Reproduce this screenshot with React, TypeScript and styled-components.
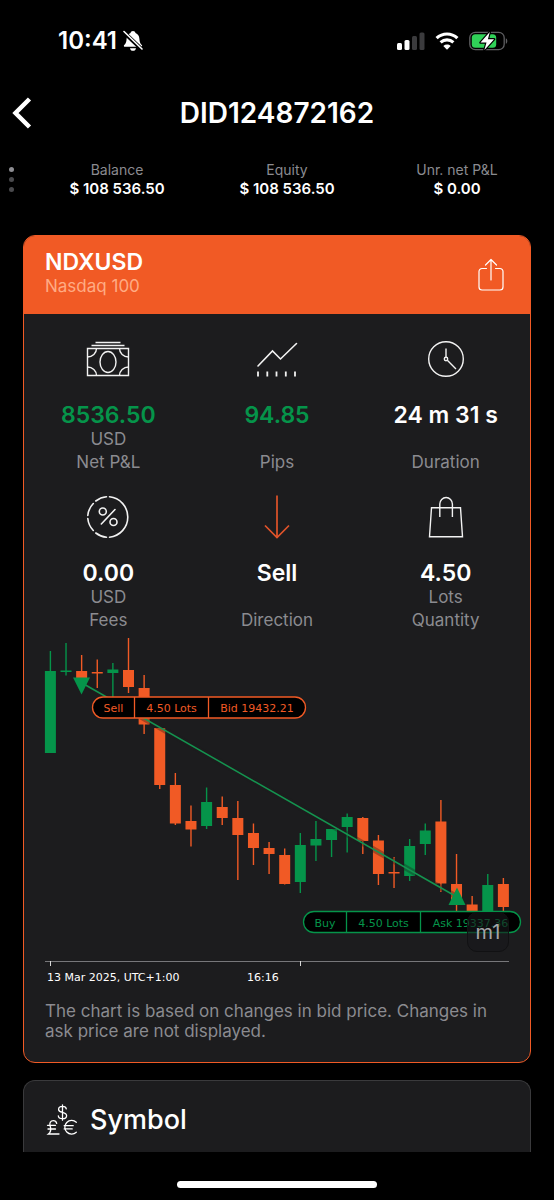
import React from 'react';
import styled, { createGlobalStyle } from 'styled-components';

const colors = {
  accent: '#f15a25',
  green: '#05944a',
  card: '#1c1c1e',
  muted: '#8b8b90',
  line: '#3a3a3c',
};

const GlobalStyle = createGlobalStyle`
  *, *::before, *::after { box-sizing: border-box; }
  body {
    margin: 0;
    background: #000;
    color: #fff;
    font-family: Inter, "Liberation Sans", sans-serif;
  }
  h1, h2, p, dl, dd, dt { margin: 0; }
  button { font: inherit; color: inherit; background: none; border: 0; padding: 0; cursor: pointer; }
`;

const Screen = styled.div`
  min-height: 100vh;
  display: flex;
  flex-direction: column;
`;

const StatusBar = styled.div`
  display: flex;
  align-items: center;
  justify-content: space-between;
  height: 82px;
  padding: 0 46px 0 58px;
`;

const Clock = styled.div`
  display: flex;
  align-items: center;
  gap: 6px;
  font-size: 24px;
  font-weight: 600;
  line-height: 28px;
`;

const StatusIcons = styled.div`
  display: flex;
  align-items: center;
  gap: 10px;
`;

const TopBar = styled.header`
  display: grid;
  grid-template-columns: 44px 1fr 44px;
  align-items: center;
  height: 62px;
`;

const BackButton = styled.button`
  display: flex;
  align-items: center;
  justify-content: center;
  height: 44px;
`;

const Title = styled.h1`
  font-size: 28px;
  font-weight: 600;
  line-height: 32px;
  text-align: center;
`;

const Summary = styled.section`
  display: flex;
  align-items: center;
  padding: 16px 12px 0 9px;
`;

const Pager = styled.div`
  display: flex;
  flex-direction: column;
  gap: 5px;
  width: 23px;
`;

const PagerDot = styled.span<{ $active?: boolean }>`
  width: 5px;
  height: 5px;
  border-radius: 50%;
  background: ${(p) => (p.$active ? '#8e8e93' : '#4a4a4d')};
`;

const SummaryList = styled.dl`
  flex: 1;
  display: grid;
  grid-template-columns: repeat(3, 1fr);
  text-align: center;
`;

const SummaryLabel = styled.dt`
  color: ${colors.muted};
  font-size: 14px;
  line-height: 20px;
`;

const SummaryValue = styled.dd`
  font-size: 15px;
  font-weight: 600;
  line-height: 18px;
`;

const Main = styled.main`
  display: flex;
  flex-direction: column;
  gap: 17px;
  padding: 37px 23px 0;
`;

const TradeCard = styled.article`
  overflow: hidden;
  border: 1px solid ${colors.accent};
  border-radius: 12px;
  background: ${colors.card};
`;

const TradeHeader = styled.header`
  display: flex;
  align-items: center;
  justify-content: space-between;
  height: 78px;
  padding: 0 26px 0 21px;
  background: ${colors.accent};
`;

const InstrumentInfo = styled.div`
  padding-bottom: 6px;
`;

const Instrument = styled.h2`
  font-size: 23px;
  font-weight: 600;
  line-height: 28px;
`;

const InstrumentName = styled.p`
  color: #ffab84;
  font-size: 17px;
  line-height: 20px;
`;

const IconButton = styled.button`
  display: flex;
`;

const Stats = styled.dl`
  display: grid;
  grid-template-columns: repeat(3, 1fr);
  row-gap: 20px;
  padding-top: 23px;
`;

const Stat = styled.div`
  display: grid;
  grid-template-rows: 44px 20px 28px 20px 26px;
  justify-items: center;
  align-items: center;
`;

const StatValue = styled.dd<{ $positive?: boolean }>`
  grid-row: 3;
  color: ${(p) => (p.$positive ? colors.green : '#fff')};
  font-size: 23px;
  font-weight: 600;
  line-height: 28px;
`;

const StatUnit = styled.dd`
  grid-row: 4;
  color: ${colors.muted};
  font-size: 17px;
  line-height: 20px;
`;

const StatLabel = styled.dt`
  grid-row: 5;
  color: ${colors.muted};
  font-size: 17px;
  line-height: 20px;
`;

const ChartBox = styled.div`
  position: relative;
`;

const ChartSvg = styled.svg`
  display: block;
  width: 100%;
  height: auto;
  font-family: "DejaVu Sans", Verdana, sans-serif;
  font-size: 11px;
`;

const IntervalButton = styled.button`
  position: absolute;
  right: 21px;
  bottom: 36px;
  width: 42px;
  height: 40px;
  border: 1px solid #111113;
  border-radius: 10px;
  background: rgba(24, 24, 26, 0.6);
  color: #a5a5a8;
  font-size: 20px;
  line-height: 36px;
`;

const Note = styled.p`
  padding: 13px 21px 21px;
  color: ${colors.muted};
  font-size: 17px;
  line-height: 20px;
`;

const SymbolCard = styled.section`
  display: flex;
  align-items: center;
  gap: 12px;
  height: 72px;
  padding: 6px 22px 0;
  border: 1px solid ${colors.line};
  border-bottom: 0;
  border-radius: 12px 12px 0 0;
  background: ${colors.card};
`;

const SymbolTitle = styled.h2`
  font-size: 27px;
  font-weight: 500;
  line-height: 32px;
`;

const HomeArea = styled.footer`
  display: flex;
  justify-content: center;
  margin-top: auto;
  padding: 29px 0 12px;
`;

const HomeBar = styled.div`
  width: 36%;
  height: 7px;
  border-radius: 4px;
  background: #fff;
`;

const MutedBell = () => (
  <svg width="20" height="22" viewBox="0 0 20 22" aria-hidden="true">
    <path
      d="M10 1c1.300 0 2.300.8 2.500 2 2.500.9 3.700 3 3.900 5.700.2 3.500.8 4.700 2.400 6.300.7.800.3 1.800-.8 1.800H2c-1.100 0-1.500-1-.8-1.800 1.600-1.600 2.200-2.800 2.400-6.300C3.800 6 5 3.900 7.500 3 7.700 1.800 8.700 1 10 1zM7 18.200h6c-.2 1.600-1.400 2.600-3 2.600s-2.800-1-3-2.600z"
      fill="#fff"
    />
    <path d="M0 1.500l19.500 18.500" stroke="#000" strokeWidth="4" />
    <path d="M1 1.500l18 17.500" stroke="#fff" strokeWidth="1.600" strokeLinecap="round" />
  </svg>
);

const Signal = () => (
  <svg width="28" height="18" viewBox="0 0 28 18" aria-hidden="true">
    <rect x="0" y="11" width="5" height="7" rx="1.500" fill="#fff" />
    <rect x="7.500" y="8" width="5" height="10" rx="1.500" fill="#fff" />
    <rect x="15" y="4" width="5" height="14" rx="1.500" fill="#3b3b3d" />
    <rect x="22.500" y="0.500" width="5" height="17.500" rx="1.500" fill="#3b3b3d" />
  </svg>
);

const Wifi = () => (
  <svg width="24" height="18" viewBox="0 0 24 18" aria-hidden="true">
    <path d="M1.600 6.200c6-5.600 14.800-5.600 20.800 0" fill="none" stroke="#fff" strokeWidth="3.200" />
    <path d="M5.600 10.400c3.700-3.400 9.100-3.400 12.800 0" fill="none" stroke="#fff" strokeWidth="3.100" />
    <path d="M12 17.800l-3.700-3.900c2.200-1.900 5.200-1.900 7.400 0z" fill="#fff" />
  </svg>
);

const Battery = () => (
  <svg width="39" height="20" viewBox="0 0 39 20" aria-hidden="true">
    <rect x="0.800" y="1.300" width="34.400" height="17.400" rx="5.500" fill="none" stroke="#5f5f62" strokeWidth="1.300" />
    <rect x="2.800" y="3.300" width="24.400" height="13.400" rx="3.500" fill="#30d158" />
    <path d="M36.800 7.200c2 .8 2 4.800 0 5.600z" fill="#5f5f62" />
    <path
      d="M20.800 1L11.500 11.600h6L15.400 19l9.700-10.800h-6.200z"
      fill="#fff"
      stroke="#000"
      strokeWidth="2.400"
      strokeLinejoin="round"
      paintOrder="stroke"
    />
  </svg>
);

const ChevronLeft = () => (
  <svg width="22" height="32" viewBox="0 0 22 32" aria-hidden="true">
    <path d="M18.500 2L4.500 16l14 14" fill="none" stroke="#fff" strokeWidth="4.500" />
  </svg>
);

const ShareIcon = () => (
  <svg width="26" height="34" viewBox="0 0 26 34" fill="none" stroke="#fff" strokeWidth="1.200" strokeLinecap="round" strokeLinejoin="round" aria-hidden="true">
    <path d="M8.500 10.500H4a3 3 0 0 0-3 3V29a3 3 0 0 0 3 3h18a3 3 0 0 0 3-3V13.500a3 3 0 0 0-3-3h-4.500" />
    <path d="M13 22V2M7.500 7L13 1.500 18.500 7" />
  </svg>
);

const StatIcon = styled.svg<{ $color?: string }>`
  grid-row: 1;
  width: 44px;
  height: 44px;
  fill: none;
  stroke: ${(p) => p.$color ?? '#f2f2f2'};
  stroke-width: 1.4;
`;

const MoneyIcon = () => (
  <StatIcon viewBox="0 0 44 44" aria-hidden="true">
    <path d="M1.500 11.500h41v27h-41zM5.500 8.500h33M9.500 5.500h25" />
    <ellipse cx="22" cy="25" rx="8" ry="10.500" />
    <path d="M10.500 11.500a9 8.500 0 0 1-9 8.500M33.500 11.500a9 8.500 0 0 0 9 8.500M10.500 38.500a9 8.500 0 0 0-9-8.500M33.500 38.500a9 8.500 0 0 1 9-8.500" />
  </StatIcon>
);

const TrendIcon = () => (
  <StatIcon viewBox="0 0 44 44" aria-hidden="true">
    <path d="M3 29L17.500 14l8 8L41.500 6.500" strokeWidth="1.600" strokeLinecap="round" />
    <path d="M3 34.500v5M12.300 34.500v5M21.500 34.500v5M30.800 34.500v5M40 34.500v5" strokeWidth="1.800" />
  </StatIcon>
);

const ClockIcon = () => (
  <StatIcon viewBox="0 0 44 44" aria-hidden="true">
    <circle cx="22" cy="22" r="17.300" />
    <circle cx="22" cy="22" r="1.700" />
    <path d="M22 20.300V11.500M23.300 23.300l8.700 8.700" />
  </StatIcon>
);

const PercentIcon = () => (
  <StatIcon viewBox="0 0 44 44" strokeLinecap="round" aria-hidden="true">
    <path d="M23.500 1.800a20.300 20.300 0 0 1 0 40.400" strokeWidth="1.600" />
    <path d="M20.500 1.800A20.300 20.300 0 0 0 9.800 6M7.300 8.500A20.300 20.300 0 0 0 1.800 20.500M1.800 23.500a20.300 20.300 0 0 0 5.500 12M9.800 38a20.300 20.300 0 0 0 10.700 4.200" strokeWidth="1.600" />
    <circle cx="16.800" cy="16.500" r="3.500" strokeWidth="1.600" />
    <circle cx="27.500" cy="27" r="3.500" strokeWidth="1.600" />
    <path d="M29 14.500L15.300 29" strokeWidth="1.600" />
  </StatIcon>
);

const DownIcon = () => (
  <StatIcon viewBox="0 0 44 44" $color="#e0532a" aria-hidden="true">
    <path d="M22 .5v42M10 30.500l12 12 12-12" strokeWidth="1.700" />
  </StatIcon>
);

const BagIcon = () => (
  <StatIcon viewBox="0 0 44 44" aria-hidden="true">
    <path d="M7.500 12.800h29l2 29h-33z" />
    <path d="M15.800 22V9a6.300 6.500 0 0 1 12.600 0v13" />
  </StatIcon>
);

const CurrencyIcon = () => (
  <svg width="32" height="32" viewBox="0 0 32 32" fill="none" stroke="#fff" strokeWidth="1.300" strokeLinecap="round" aria-hidden="true">
    <path d="M16.500.8v15.400M20.300 4.800c-.2-1.400-1.600-2.400-3.800-2.400s-3.900 1.100-3.900 3c0 4 8 2 8 6.300 0 1.900-1.700 3-4.100 3s-4.100-1.200-4.200-2.900" />
    <path d="M10.700 19.400c-.5-1.900-1.700-2.700-3.400-2.700-2.700 0-4.100 2.200-3.200 5 1.100 3.200 1.400 6-1.700 8.300H13M1.500 21.300h8M2 25h7.500" />
    <path d="M30.300 18.300a6.800 6.800 0 1 0 0 9.900M18.200 21.700h9M18.200 24.900h8" />
  </svg>
);

type StatItem = {
  label: string;
  value: string;
  unit?: string;
  positive?: boolean;
  Icon: React.FC;
};

const stats: StatItem[] = [
  { label: 'Net P&L', value: '8536.50', unit: 'USD', positive: true, Icon: MoneyIcon },
  { label: 'Pips', value: '94.85', positive: true, Icon: TrendIcon },
  { label: 'Duration', value: '24 m 31 s', Icon: ClockIcon },
  { label: 'Fees', value: '0.00', unit: 'USD', Icon: PercentIcon },
  { label: 'Direction', value: 'Sell', Icon: DownIcon },
  { label: 'Quantity', value: '4.50', unit: 'Lots', Icon: BagIcon },
];

const summary = [
  { label: 'Balance', value: '$ 108 536.50' },
  { label: 'Equity', value: '$ 108 536.50' },
  { label: 'Unr. net P&L', value: '$ 0.00' },
];

// Each candle: rising flag, then high, body top, body bottom and low in chart units.
type Candle = [boolean, number, number, number, number];

const candles: Candle[] = [
  [true, 18, 38, 120, 120],
  [true, 10, 37.5, 39, 42.5],
  [false, 22, 38, 46, 48],
  [false, 26.5, 39, 40.5, 55],
  [true, 30, 36.5, 40, 64],
  [false, 5, 37, 54, 60],
  [false, 42, 55, 91.5, 101],
  [false, 95, 95, 152, 156],
  [false, 140, 152, 190.5, 192],
  [false, 172.5, 188, 196.5, 213.5],
  [true, 154.5, 169, 193, 196],
  [false, 163.5, 174, 185, 192],
  [false, 168, 185, 202, 247],
  [false, 190.5, 200, 215, 232],
  [false, 209, 215, 221, 241],
  [false, 215.5, 222, 251, 251.5],
  [true, 200, 212, 249, 260],
  [true, 188, 206, 212.5, 228],
  [true, 196, 196, 207, 224],
  [true, 180.5, 184, 194, 219.5],
  [false, 184, 185, 208, 221],
  [false, 202, 207.5, 241, 252],
  [false, 224, 239, 240.5, 255],
  [true, 206, 213, 243, 248],
  [true, 190.5, 197.5, 211, 222],
  [false, 167, 188.5, 250.5, 259],
  [false, 221, 251, 270, 279],
  [false, 263, 271.5, 279, 279],
  [true, 241, 252, 279, 279],
  [false, 245, 251, 274, 279],
];

const FIRST_CANDLE = 26.4;
const CANDLE_STEP = 15.62;

const TradeLabel: React.FC<{
  x: number;
  y: number;
  color: string;
  cells: { text: string; width: number }[];
}> = ({ x, y, color, cells }) => {
  const total = cells.reduce((sum, c) => sum + c.width, 0);
  let left = x;
  return (
    <g>
      <rect x={x} y={y} width={total} height={21} rx={10.5} fill="#000" stroke={color} strokeWidth="1.3" />
      {cells.map((cell, i) => {
        const start = left;
        left += cell.width;
        return (
          <g key={cell.text}>
            {i > 0 && <path d={`M${start} ${y}v21`} stroke={color} strokeWidth="1.3" />}
            <text x={start + cell.width / 2} y={y + 15} textAnchor="middle" fill={color}>
              {cell.text}
            </text>
          </g>
        );
      })}
    </g>
  );
};

const PriceChart = () => (
  <ChartSvg viewBox="0 0 506 355" role="img" aria-label="Nasdaq 100 price chart with trade entry and exit">
    {candles.map(([up, high, top, bottom, low], i) => {
      const x = FIRST_CANDLE + i * CANDLE_STEP;
      const fill = up ? colors.green : colors.accent;
      return (
        <g key={i} fill={fill}>
          <rect x={x - 0.7} y={high} width={1.4} height={low - high} />
          <rect x={x - 5.5} y={top} width={11} height={bottom - top} />
        </g>
      );
    })}
    <path d="M58 50L433 264" stroke={colors.card} strokeOpacity="0.35" strokeWidth="6" />
    <path d="M58 50L433 264" stroke="#149450" strokeWidth="1.5" />
    <path d="M49 44.500h17L57.500 61.500zM424.500 272h17L433 254.500z" fill={colors.green} />
    <TradeLabel
      x={68.5}
      y={64}
      color={colors.accent}
      cells={[
        { text: 'Sell', width: 42 },
        { text: '4.50 Lots', width: 74 },
        { text: 'Bid 19432.21', width: 97 },
      ]}
    />
    <TradeLabel
      x={279.5}
      y={278.5}
      color={colors.green}
      cells={[
        { text: 'Buy', width: 43 },
        { text: '4.50 Lots', width: 74 },
        { text: 'Ask 19337.36', width: 100 },
      ]}
    />
    <path d="M21 328.500h464" stroke="#77777a" />
    <path d="M26.500 328v5M276.500 328v5" stroke="#d8d8d8" />
    <text x="23" y="348" fill="#fff">13 Mar 2025, UTC+1:00</text>
    <text x="223" y="348" fill="#fff">16:16</text>
  </ChartSvg>
);

export default function App() {
  return (
    <>
      <GlobalStyle />
      <Screen>
        <StatusBar>
          <Clock>
            10:41
            <MutedBell />
          </Clock>
          <StatusIcons>
            <Signal />
            <Wifi />
            <Battery />
          </StatusIcons>
        </StatusBar>
        <TopBar>
          <BackButton aria-label="Back">
            <ChevronLeft />
          </BackButton>
          <Title>DID124872162</Title>
        </TopBar>
        <Summary>
          <Pager>
            <PagerDot $active />
            <PagerDot />
            <PagerDot />
          </Pager>
          <SummaryList>
            {summary.map((item) => (
              <div key={item.label}>
                <SummaryLabel>{item.label}</SummaryLabel>
                <SummaryValue>{item.value}</SummaryValue>
              </div>
            ))}
          </SummaryList>
        </Summary>
        <Main>
          <TradeCard>
            <TradeHeader>
              <InstrumentInfo>
                <Instrument>NDXUSD</Instrument>
                <InstrumentName>Nasdaq 100</InstrumentName>
              </InstrumentInfo>
              <IconButton aria-label="Share">
                <ShareIcon />
              </IconButton>
            </TradeHeader>
            <Stats>
              {stats.map(({ label, value, unit, positive, Icon }) => (
                <Stat key={label}>
                  <Icon />
                  <StatLabel>{label}</StatLabel>
                  <StatValue $positive={positive}>{value}</StatValue>
                  {unit && <StatUnit>{unit}</StatUnit>}
                </Stat>
              ))}
            </Stats>
            <ChartBox>
              <PriceChart />
              <IntervalButton>m1</IntervalButton>
            </ChartBox>
            <Note>
              The chart is based on changes in bid price. Changes in ask price are not displayed.
            </Note>
          </TradeCard>
          <SymbolCard>
            <CurrencyIcon />
            <SymbolTitle>Symbol</SymbolTitle>
          </SymbolCard>
        </Main>
        <HomeArea>
          <HomeBar />
        </HomeArea>
      </Screen>
    </>
  );
}
